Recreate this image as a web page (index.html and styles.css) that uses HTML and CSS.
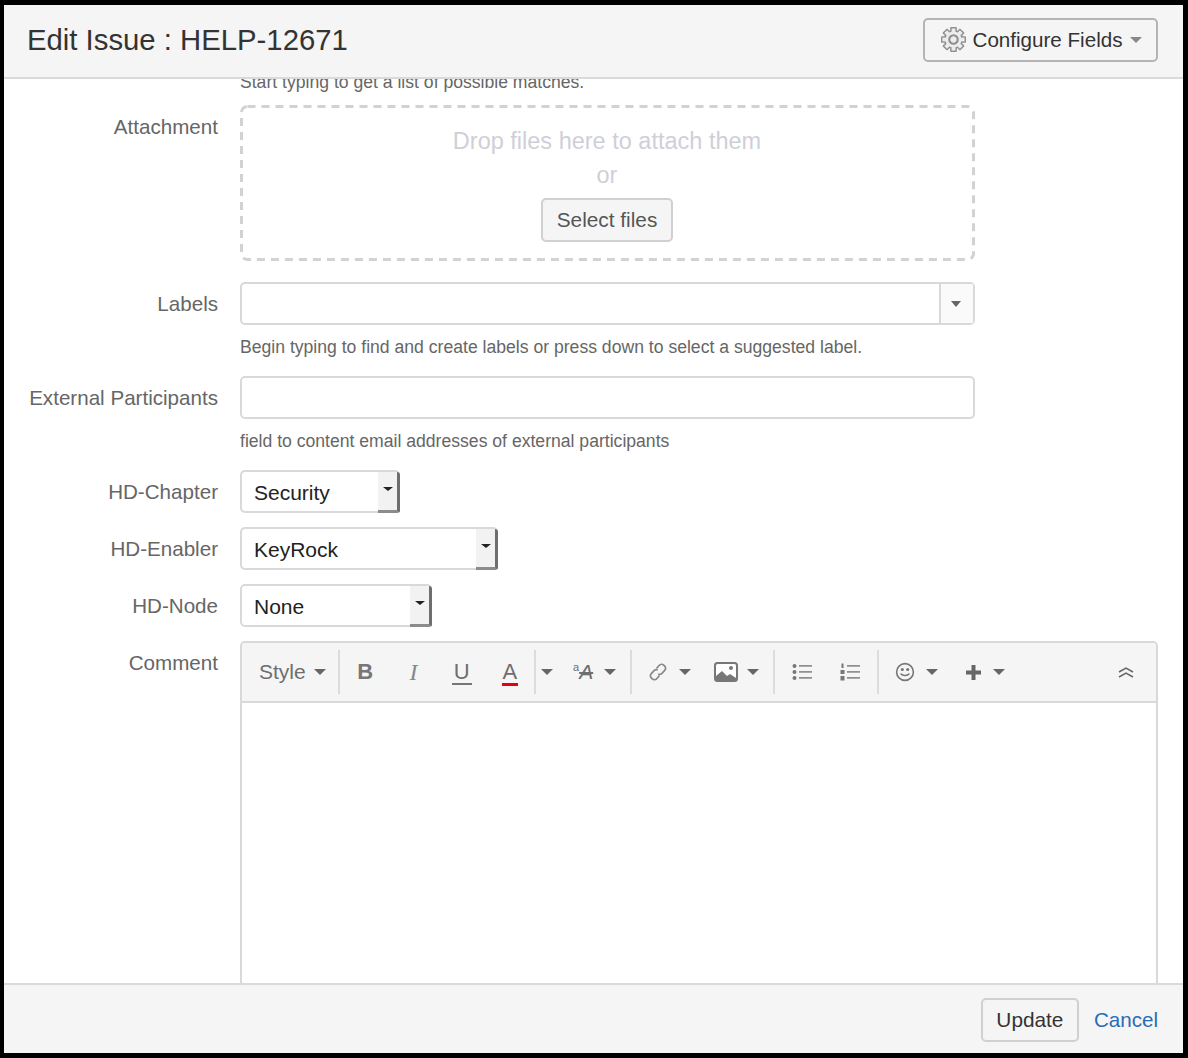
FILE: index.html
```html
<!DOCTYPE html>
<html lang="en">
<head>
    <meta charset="UTF-8">
    <title>Edit Issue : HELP-12671</title>
    <link rel="stylesheet" href="styles.css">
</head>
<body>
    <svg class="defs" width="0" height="0">
        <defs>
            <g id="gear-outer">
                <rect x="-3.500" y="-13" width="7" height="26" rx="1"/>
                <rect x="-3.500" y="-13" width="7" height="26" rx="1" transform="rotate(45)"/>
                <rect x="-3.500" y="-13" width="7" height="26" rx="1" transform="rotate(90)"/>
                <rect x="-3.500" y="-13" width="7" height="26" rx="1" transform="rotate(135)"/>
            </g>
            <g id="gear-inner">
                <rect x="-2" y="-11.500" width="4" height="23"/>
                <rect x="-2" y="-11.500" width="4" height="23" transform="rotate(45)"/>
                <rect x="-2" y="-11.500" width="4" height="23" transform="rotate(90)"/>
                <rect x="-2" y="-11.500" width="4" height="23" transform="rotate(135)"/>
            </g>
        </defs>
    </svg>

    <div class="dialog">
        <div class="dialog-head">
            <h1>Edit Issue : HELP-12671</h1>
            <button class="btn btn-config">
                <svg class="gear" viewBox="-13 -13 26 26" width="25" height="25">
                    <use href="#gear-outer" fill="#8f8f8f"/>
                    <circle r="10" fill="#8f8f8f"/>
                    <use href="#gear-inner" fill="#ececec"/>
                    <circle r="8.300" fill="#ececec"/>
                    <circle r="4.400" fill="none" stroke="#8f8f8f" stroke-width="2.200"/>
                </svg>
                Configure Fields
                <span class="caret caret-light"></span>
            </button>
        </div>

        <div class="dialog-body">
            <div class="field first">
                <div></div>
                <div class="hint">Start typing to get a list of possible matches.</div>
            </div>

            <div class="field attach">
                <label>Attachment</label>
                <div class="dropzone">
                    <svg class="dropzone-line" width="735" height="156">
                        <rect x="1.500" y="1.500" width="732" height="153" rx="6"/>
                    </svg>
                    <div class="drop-text">Drop files here to attach them</div>
                    <div class="drop-or">or</div>
                    <button class="btn btn-select">Select files</button>
                </div>
            </div>

            <div class="field labels">
                <label>Labels</label>
                <div>
                    <div class="input input-picker">
                        <span class="picker-arrow"><span class="caret"></span></span>
                    </div>
                    <div class="hint hint-below">Begin typing to find and create labels or press down to select a suggested label.</div>
                </div>
            </div>

            <div class="field participants">
                <label>External Participants</label>
                <div>
                    <div class="input"></div>
                    <div class="hint hint-below">field to content email addresses of external participants</div>
                </div>
            </div>

            <div class="field chapter">
                <label>HD-Chapter</label>
                <div class="select select-chapter">Security<span class="select-arrow"><span class="caret caret-small"></span></span></div>
            </div>

            <div class="field enabler">
                <label>HD-Enabler</label>
                <div class="select select-enabler">KeyRock<span class="select-arrow"><span class="caret caret-small"></span></span></div>
            </div>

            <div class="field node">
                <label>HD-Node</label>
                <div class="select select-node">None<span class="select-arrow"><span class="caret caret-small"></span></span></div>
            </div>

            <div class="field comment">
                <label>Comment</label>
                <div class="editor">
                    <div class="toolbar">
                        <span class="tool-style">Style<span class="caret"></span></span>
                        <span class="sep"></span>
                        <span class="tool letter letter-b">B</span>
                        <span class="tool letter letter-i">I</span>
                        <span class="tool letter letter-u"><span>U</span></span>
                        <span class="tool letter letter-a"><span>A</span></span>
                        <span class="sep"></span>
                        <span class="tool-caret"><span class="caret"></span></span>
                        <span class="tool-size"><sup>a</sup><span class="size-letter">A</span><span class="caret"></span></span>
                        <span class="sep"></span>
                        <svg class="icon icon-link" viewBox="0 0 20 20" width="20" height="20" fill="none" stroke="#888" stroke-width="1.700">
                            <path d="M8.500 6.500l2.800-3.200a3 3 0 0 1 4.400-.2l1 1a3 3 0 0 1 0 4.300l-3 3.200a3 3 0 0 1-3.400.4"/>
                            <path d="M11.500 13.500l-2.800 3.200a3 3 0 0 1-4.400.2l-1-1a3 3 0 0 1 0-4.300l3-3.200a3 3 0 0 1 3.400-.4"/>
                        </svg>
                        <span class="caret caret-link"></span>
                        <svg class="icon icon-image" viewBox="0 0 24 20" width="24" height="20">
                            <rect x="1" y="1" width="22" height="18" rx="2.500" fill="#fff" stroke="#777" stroke-width="2"/>
                            <path d="M2 18v-4l6-5 5 5 3-2 6 4v2z" fill="#777"/>
                            <circle cx="17" cy="6" r="2" fill="#777"/>
                        </svg>
                        <span class="caret caret-image"></span>
                        <span class="sep sep-list"></span>
                        <svg class="icon icon-bullets" viewBox="0 0 20 18" width="20" height="18" fill="#777">
                            <circle cx="2.500" cy="3" r="2"/><circle cx="2.500" cy="9" r="2"/><circle cx="2.500" cy="15" r="2"/>
                            <rect x="7" y="2.200" width="13" height="1.400"/><rect x="7" y="8.200" width="13" height="1.400"/><rect x="7" y="14.200" width="13" height="1.400"/>
                        </svg>
                        <svg class="icon icon-numbers" viewBox="0 0 20 18" width="20" height="18" fill="#777">
                            <rect x="1.500" y="0.500" width="2" height="4.500"/><rect x="0.500" y="7" width="4" height="4"/><rect x="0.500" y="13" width="4" height="4.500"/>
                            <rect x="7" y="2.200" width="13" height="1.400"/><rect x="7" y="8.200" width="13" height="1.400"/><rect x="7" y="14.200" width="13" height="1.400"/>
                        </svg>
                        <span class="sep sep-smile"></span>
                        <svg class="icon icon-smile" viewBox="0 0 20 20" width="20" height="20" fill="none" stroke="#777" stroke-width="1.600">
                            <circle cx="10" cy="10" r="8.400"/>
                            <path d="M5.800 11.500c1 2.600 7.400 2.600 8.400 0"/>
                            <circle cx="7.300" cy="7.500" r=".8" fill="#777"/>
                            <circle cx="12.700" cy="7.500" r=".8" fill="#777"/>
                        </svg>
                        <span class="caret caret-smile"></span>
                        <svg class="icon icon-plus" viewBox="0 0 17 17" width="17" height="17" fill="#666">
                            <path d="M6.500 1h4v5.500H16v4h-5.500V16h-4v-5.500H1v-4h5.500z"/>
                        </svg>
                        <span class="caret caret-plus"></span>
                        <svg class="icon icon-collapse" viewBox="0 0 16 12" width="16" height="12" fill="none" stroke="#666" stroke-width="1.500">
                            <path d="M1 6l7-4 7 4M1 11l7-4 7 4"/>
                        </svg>
                    </div>
                    <div class="editor-area"></div>
                </div>
            </div>
        </div>

        <div class="dialog-foot">
            <button class="btn btn-update">Update</button>
            <a class="cancel" href="#">Cancel</a>
        </div>
    </div>
</body>
</html>
```

FILE: styles.css
```css
* {
    box-sizing: border-box;
}
html, body {
    margin: 0;
    height: 100%;
}
body {
    font-family: "Liberation Sans", Arial, sans-serif;
    color: #333;
    background: #000;
}
.defs {
    display: block;
    height: 0;
}
.dialog {
    display: flex;
    flex-direction: column;
    height: 1058px;
    margin: 0;
    border: solid #000;
    border-width: 5px 5px 5px 4px;
    background: #fff;
    overflow: hidden;
}
.btn {
    font-family: inherit;
    color: #333;
    background: #f5f5f5;
    border: 2px solid #d0d0d0;
    border-radius: 5px;
    font-size: 20.800px;
    padding: 0;
}

/* header */
.dialog-head {
    flex: none;
    height: 74px;
    padding: 0 25px 2px 23px;
    display: flex;
    align-items: center;
    justify-content: space-between;
    background: #f5f5f5;
    border-bottom: 2px solid #dadada;
}
.dialog-head h1 {
    margin: 0;
    font-size: 29.300px;
    font-weight: normal;
    color: #333;
}
.btn-config {
    width: 235px;
    height: 44px;
    display: flex;
    align-items: center;
    justify-content: center;
    gap: 7px;
    border-color: #b4b4b4;
    padding-left: 2px;
    font-size: 20.600px;
    margin-top: -1px;
}
.gear {
    flex: none;
}

.caret {
    display: inline-block;
    width: 0;
    height: 0;
    border-left: 6px solid transparent;
    border-right: 6px solid transparent;
    border-top: 6px solid #666;
}
.caret-light {
    border-top-color: #888;
    margin-left: 1px;
}
.caret-small {
    border-left-width: 5px;
    border-right-width: 5px;
    border-top-width: 4px;
    border-top-color: #222;
}

/* form */
.dialog-body {
    flex: 1;
    min-height: 0;
    overflow: hidden;
}
.field {
    display: grid;
    grid-template-columns: 214px 735px;
    column-gap: 22px;
}
.field label {
    text-align: right;
    font-size: 20.600px;
    line-height: 24px;
    color: #666;
}
.hint {
    font-size: 17.600px;
    line-height: 22px;
    color: #666;
}
.hint-below {
    margin-top: 11px;
}
.first {
    margin-top: -8px;
}
.attach {
    margin-top: 12px;
}
.attach label {
    padding-top: 10px;
}
.dropzone {
    position: relative;
    height: 156px;
    padding: 3px 1px 0 0;
    text-align: center;
}
.dropzone-line {
    position: absolute;
    top: 0;
    left: 0;
}
.dropzone-line rect {
    fill: none;
    stroke: #d2d2d2;
    stroke-width: 3;
    stroke-dasharray: 8 6;
}
.drop-text {
    margin-top: 19px;
    font-size: 23.500px;
    line-height: 28px;
    color: #cfcfd8;
}
.drop-or {
    margin-top: 6px;
    font-size: 23.500px;
    line-height: 28px;
    color: #cfcfd8;
}
.btn-select {
    display: block;
    position: relative;
    width: 132px;
    height: 44px;
    margin: 9px auto 0;
    color: #555;
}
.labels {
    margin-top: 21px;
}
.labels label,
.participants label {
    padding-top: 10px;
}
.input {
    height: 43px;
    border: 2px solid #d9d9d9;
    border-radius: 5px;
    background: #fff;
}
.input-picker {
    display: flex;
    justify-content: flex-end;
}
.picker-arrow {
    width: 34px;
    padding-right: 3px;
    display: flex;
    align-items: center;
    justify-content: center;
    border-left: 2px solid #d9d9d9;
    background: #fafafa;
}
.picker-arrow .caret {
    border-left-width: 5px;
    border-right-width: 5px;
}
.participants {
    margin-top: 18px;
}
.chapter {
    margin-top: 18px;
}
.enabler,
.node {
    margin-top: 14px;
}
.chapter label,
.enabler label,
.node label {
    padding-top: 10px;
}
.select {
    position: relative;
    height: 43px;
    padding: 2px 0 0 12px;
    display: flex;
    align-items: center;
    font-size: 21px;
    color: #222;
    border: 2px solid #d9d9d9;
    border-radius: 5px;
    background: #fff;
}
.select-chapter {
    width: 160px;
}
.select-enabler {
    width: 258px;
}
.select-node {
    width: 192px;
}
.select-arrow {
    position: absolute;
    top: 0;
    right: -2px;
    bottom: -2px;
    width: 22px;
    display: flex;
    align-items: center;
    justify-content: center;
    padding-bottom: 4px;
    background: #f2f2f2;
    border-right: 3px solid #6e6e6e;
    border-bottom: 3px solid #8c8c8c;
    border-radius: 0 3px 3px 0;
}

/* comment editor */
.comment {
    grid-template-columns: 214px 918px;
    margin-top: 14px;
}
.comment label {
    padding-top: 10px;
}
.editor {
    height: 400px;
    border: 2px solid #d9d9d9;
    border-radius: 5px 5px 0 0;
}
.toolbar {
    height: 60px;
    display: flex;
    align-items: center;
    background: #f5f5f5;
    border-bottom: 2px solid #d9d9d9;
    border-radius: 4px 4px 0 0;
    color: #6e6e6e;
}
.sep {
    flex: none;
    width: 2px;
    height: 44px;
    background: #dcdcdc;
}
.tool-style {
    flex: none;
    width: 96px;
    padding-left: 17px;
    display: flex;
    align-items: center;
    gap: 8px;
    font-size: 21px;
}
.tool {
    flex: none;
    width: 48.250px;
    text-align: center;
}
.letter {
    font-size: 22px;
    line-height: 26px;
}
.letter-b {
    font-weight: bold;
    margin-left: 1px;
    color: #777;
}
.letter-i {
    font-family: "Liberation Serif", serif;
    font-style: italic;
    font-size: 24px;
    color: #888;
}
.letter-u span {
    display: inline-block;
    line-height: 22px;
    padding: 0 2px;
    border-bottom: 2px solid #777;
}
.letter-a span {
    display: inline-block;
    line-height: 22px;
    padding: 0 1px;
    border-bottom: 3px solid #e4000f;
}
.tool-caret {
    flex: none;
    width: 22px;
    display: flex;
    justify-content: center;
}
.tool-size {
    flex: none;
    width: 72px;
    padding-left: 15px;
    display: flex;
    align-items: center;
    font-size: 21px;
    font-style: italic;
}
.tool-size sup {
    font-size: 11px;
    font-style: normal;
    margin-top: -10px;
}
.size-letter {
    text-decoration: line-through;
}
.tool-size .caret {
    margin-left: 11px;
}
.icon {
    flex: none;
}
.icon-link {
    margin-left: 16px;
}
.caret-link {
    margin-left: 11px;
}
.icon-image {
    margin-left: 23px;
}
.caret-image {
    margin-left: 9px;
    margin-right: 14px;
}
.icon-bullets {
    margin-left: 17px;
}
.icon-numbers {
    margin-left: 28px;
}
.sep-smile {
    margin-left: 17px;
}
.icon-smile {
    margin-left: 16px;
}
.caret-smile {
    margin-left: 11px;
}
.icon-plus {
    margin-left: 27px;
}
.caret-plus {
    margin-left: 11px;
}
.icon-collapse {
    margin-left: auto;
    margin-right: 22px;
}

/* footer */
.dialog-foot {
    flex: none;
    height: 70px;
    padding: 2px 25px 0 0;
    display: flex;
    align-items: center;
    justify-content: flex-end;
    gap: 15px;
    background: #f5f5f5;
    border-top: 2px solid #dadada;
}
.btn-update {
    width: 98px;
    height: 44px;
}
.cancel {
    font-size: 20.600px;
    color: #2a6db5;
    text-decoration: none;
}
```
